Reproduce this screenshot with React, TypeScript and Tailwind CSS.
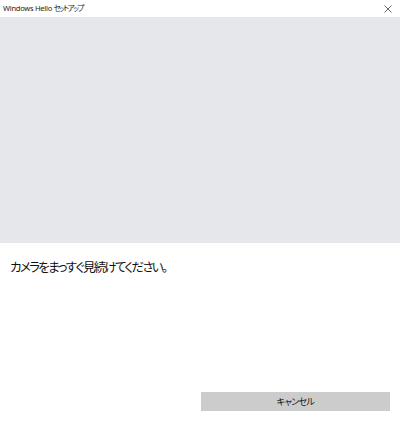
export default function App() {
  return (
    <div
      className="flex h-[423px] w-[400px] flex-col bg-white text-black [font-feature-settings:'palt']"
      style={{ fontFamily: '"Noto Sans", "Noto Sans CJK JP", sans-serif' }}
    >
      <div className="flex h-[17px] items-center justify-between pl-[3px] pr-[6px]">
        <span className="text-[7.5px] leading-none tracking-[-0.25px] text-[#1a1a1a]">
          Windows Hello{" "}
          <span className="tracking-[-1.6px]">セットアップ</span>
        </span>
        <svg width="8" height="8" viewBox="0 0 8 8" className="mr-[2px] mt-[1px]">
          <path d="M0.5 0.5 L7.5 7.5 M7.5 0.5 L0.5 7.5" stroke="#555" strokeWidth="0.9" />
        </svg>
      </div>

      <div className="h-[226px] bg-[#e6e7ea]" />

      <div className="flex flex-1 flex-col px-[10px]">
        <p className="mt-[16px] text-[12.5px] leading-[18px] tracking-[-1.7px] text-[#111]">
          カメラをまっすぐ見続けてください。
        </p>
        <div className="mt-auto mb-[12px] flex justify-end">
          <button className="flex h-[19px] w-[189px] items-center justify-center bg-[#cccccc] text-[9px] tracking-[-0.6px] text-[#111]">
            キャンセル
          </button>
        </div>
      </div>
    </div>
  );
}
